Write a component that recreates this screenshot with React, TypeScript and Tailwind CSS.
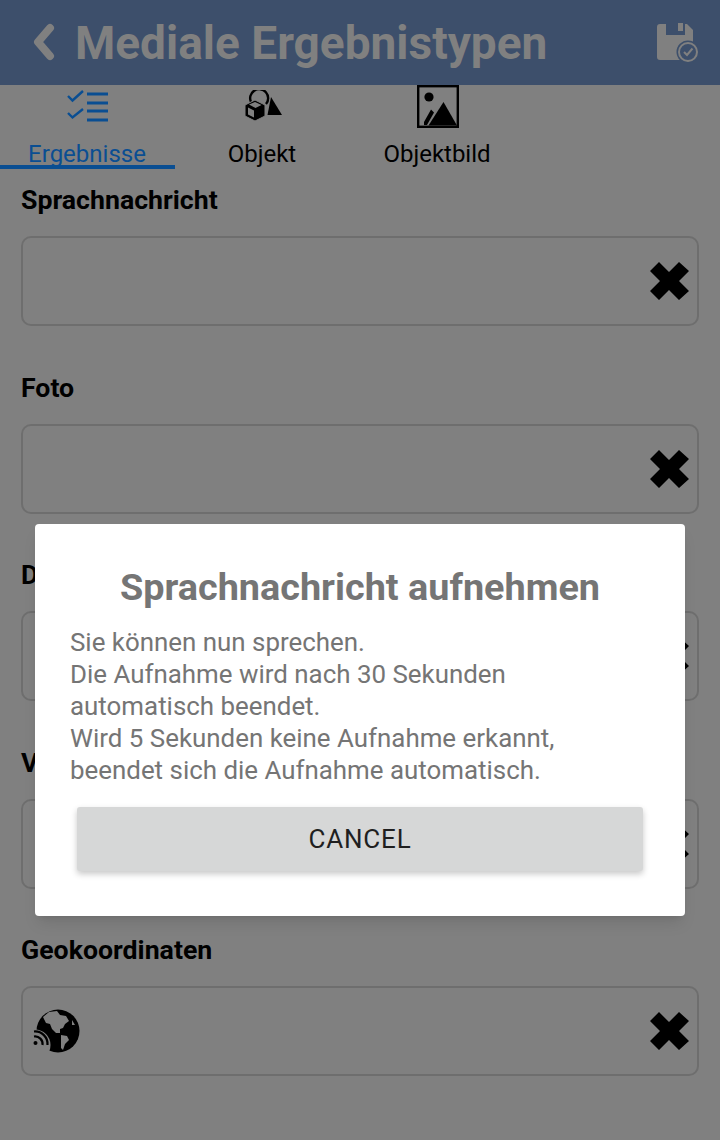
import type { ReactNode } from "react";

const FIELDS = ["Sprachnachricht", "Foto", "Dokument", "Video", "Geokoordinaten"];

function CloseIcon() {
  return (
    <svg width="42" height="40" viewBox="0 0 42 40" className="shrink-0">
      <polygon
        fill="#000"
        points="11,1 21,11 31,1 41,10 31,20 41,30 31,39 21,29 11,39 2,30 12,20 2,10"
      />
    </svg>
  );
}

// drawn in page coordinates, easier to compare with the reference
function GlobeIcon() {
  return (
    <svg width="50" height="48" viewBox="32 1007 50 48">
      <circle cx="58" cy="1031" r="21.5" fill="#000" />
      <path
        d="M43 1017 L49 1012 L57 1011 L60 1015 L66 1016 L69 1021 L65 1024 L63 1028 L60 1029 L60 1033 L56 1033 L52 1029 L50 1024 L46 1023 Z"
        fill="#808080"
      />
      <path d="M61 1035 L67 1036 L69 1040 L65 1044 L63 1050 L61 1048 L61 1042 Z" fill="#808080" />
      <path d="M72 1020 L75 1025 L72 1025 Z" fill="#808080" />
      <circle cx="35" cy="1045" r="15.5" fill="#808080" />
      <circle cx="35.5" cy="1043" r="2" fill="#000" />
      <path d="M34 1036.5 A7.5 7.5 0 0 1 42.5 1045" fill="none" stroke="#000" strokeWidth="2.2" />
      <path d="M34 1031.5 A12.5 12.5 0 0 1 47.5 1045" fill="none" stroke="#000" strokeWidth="2.2" />
    </svg>
  );
}

function ListIcon() {
  return (
    <svg width="42" height="34" viewBox="67 90 42 34" fill="none" stroke="#0a4e92">
      <path d="M68 96 L72.5 100.5 L83 91" strokeWidth="2.4" />
      <path d="M68 113 L72.5 117.5 L83 109" strokeWidth="2.4" />
      <path d="M87 94 H108 M87 103 H108 M87 111 H108 M87 120 H108" strokeWidth="2.8" />
    </svg>
  );
}

function ObjectIcon() {
  return (
    <svg width="38" height="34" viewBox="243 90 38 34">
      <path d="M250 102 A9 9 0 1 1 265 104" fill="none" stroke="#000" strokeWidth="2.4" />
      <path d="M270 97 L281 115 L266.5 115 Z" fill="#000" />
      <path d="M254 100 L264 105 L264 116 L254 121 L244 116 L244 105 Z" fill="#000" stroke="#808080" strokeWidth="1" strokeLinejoin="round" />
      <path d="M247 107.5 L253 110.5 L253 117.5 L247 114.5 Z" fill="#808080" />
      <path d="M248 104.5 L254 102 L260.5 105 L254.5 108 Z" fill="#808080" />
    </svg>
  );
}

function PictureIcon() {
  return (
    <svg width="42" height="43" viewBox="417 85 42 43">
      <rect x="418.2" y="86.2" width="39.6" height="40.6" fill="#808080" stroke="#000" strokeWidth="2.4" />
      <circle cx="429" cy="97" r="4.6" fill="#000" />
      <path d="M424 122 L431 109.5 L434 112.5 L427 125 L424 125 Z" fill="#000" />
      <path d="M428.5 125.5 L443.5 102 L457 125.5 Z" fill="#000" />
    </svg>
  );
}

function SaveIcon() {
  return (
    <svg width="42" height="40" viewBox="656 22 42 40" className="shrink-0">
      <path
        d="M660 23 H687 L693 29 V56 A3 3 0 0 1 690 59 H660 A3 3 0 0 1 657 56 V26 A3 3 0 0 1 660 23 Z"
        fill="#808080"
      />
      <rect x="666" y="22" width="19" height="12" fill="#3d4f6b" />
      <rect x="678" y="22" width="5" height="8" fill="#808080" />
      <circle cx="688" cy="51" r="11.5" fill="#3d4f6b" />
      <circle cx="688" cy="51" r="9" fill="none" stroke="#808080" strokeWidth="2" />
      <path d="M684 51 L687 54 L692.5 47.5" fill="none" stroke="#808080" strokeWidth="2" />
    </svg>
  );
}

function Tab({ icon, label, active }: { icon: ReactNode; label: string; active?: boolean }) {
  return (
    <div className={`relative w-[175px] h-[84px] flex flex-col items-center ${active ? "text-[#0a4e92]" : "text-black"}`}>
      <div className="h-[43px] flex items-center justify-center">{icon}</div>
      <div className="mt-[12px] text-[24px] leading-[28px] -ml-[1px]">{label}</div>
      {active && <div className="absolute left-0 bottom-0 w-full h-[4px] bg-[#0a4e92]" />}
    </div>
  );
}

export default function App() {
  return (
    <div className="relative w-[720px] h-[1140px] overflow-hidden bg-[#808080] font-['Roboto',sans-serif]">
      {/* header */}
      <div className="h-[85px] bg-[#3d4f6b] flex items-center pl-[30px] pr-[22px] text-[#808080]">
        <svg width="26" height="40" viewBox="30 22 26 40" className="shrink-0">
          <path d="M50 27 L38 41 L50 55" fill="none" stroke="#808080" strokeWidth="8" strokeLinejoin="round" strokeLinecap="round" />
        </svg>
        <div className="ml-[19px] flex-1 text-[46px] leading-[50px] font-bold">Mediale Ergebnistypen</div>
        <SaveIcon />
      </div>

      {/* tabs */}
      <div className="flex">
        <Tab icon={<ListIcon />} label="Ergebnisse" active />
        <Tab icon={<ObjectIcon />} label="Objekt" />
        <Tab icon={<PictureIcon />} label="Objektbild" />
      </div>

      {/* fields */}
      <div className="px-[21px] pt-[16px] flex flex-col gap-[46.5px]">
        {FIELDS.map((name) => (
          <div key={name}>
            <div className="text-[26.7px] leading-[30px] font-bold text-black">{name}</div>
            <div className="mt-[21px] h-[90px] rounded-[10px] border-2 border-[#6e6e6e] flex items-center justify-between pl-[9px] pr-[7px]">
              {name === "Geokoordinaten" ? <GlobeIcon /> : <div />}
              <CloseIcon />
            </div>
          </div>
        ))}
      </div>

      {/* dialog */}
      <div className="absolute left-[35px] top-[524px] w-[650px] h-[392px] bg-white rounded-[4px] shadow-lg px-[35px]">
        <div className="mt-[38px] pt-[2px] text-center text-[37.8px] leading-[46px] font-bold text-[#757575]">
          Sprachnachricht aufnehmen
        </div>
        <div className="mt-[16px] text-[25.9px] leading-[32px] text-[#757575]">
          Sie können nun sprechen.
          <br />
          Die Aufnahme wird nach 30 Sekunden
          <br />
          automatisch beendet.
          <br />
          Wird 5 Sekunden keine Aufnahme erkannt,
          <br />
          beendet sich die Aufnahme automatisch.
        </div>
        <div className="mt-[21px] ml-[7px] w-[566px] h-[64px] pt-[1px] rounded-[3px] bg-[#d6d7d7] shadow-[0_3px_6px_rgba(0,0,0,0.22)] flex items-center justify-center text-[26px] tracking-[0.8px] text-[#1f1f1f]">
          CANCEL
        </div>
      </div>
    </div>
  );
}
